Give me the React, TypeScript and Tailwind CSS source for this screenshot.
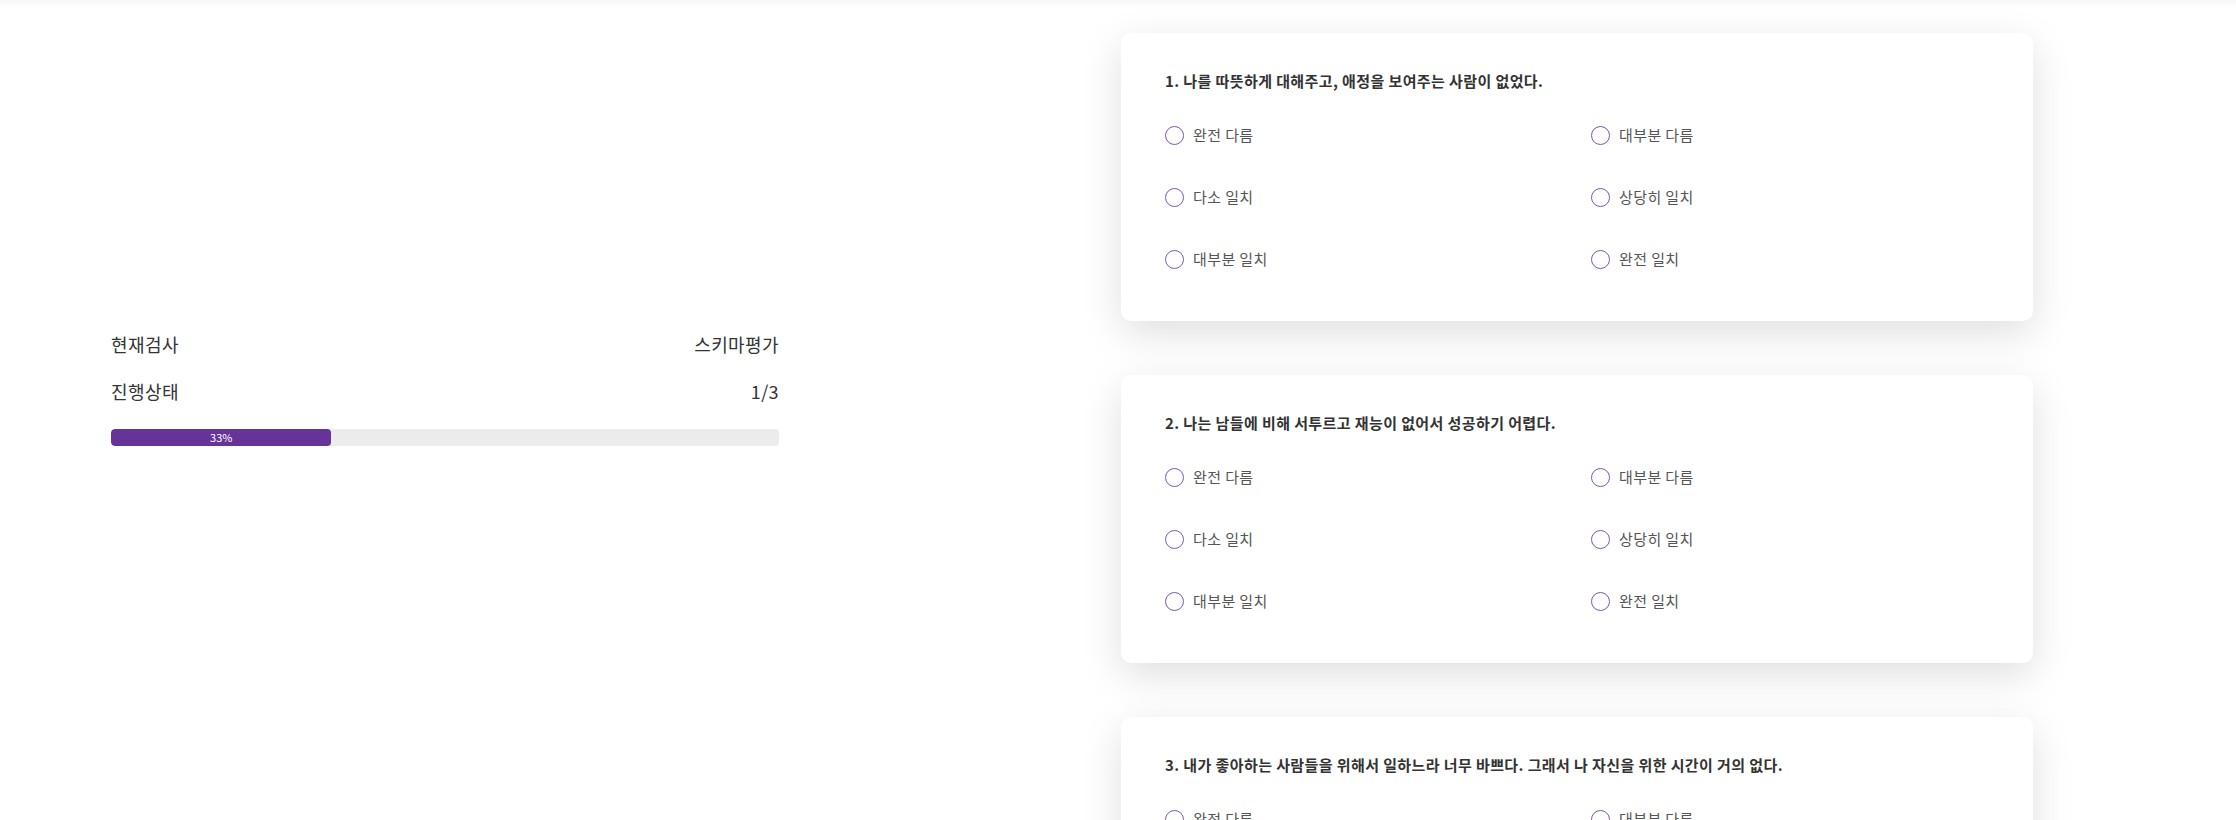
import React from 'react';

const options = ['완전 다름', '대부분 다름', '다소 일치', '상당히 일치', '대부분 일치', '완전 일치'];

const questions = [
  '1. 나를 따뜻하게 대해주고, 애정을 보여주는 사람이 없었다.',
  '2. 나는 남들에 비해 서투르고 재능이 없어서 성공하기 어렵다.',
  '3. 내가 좋아하는 사람들을 위해서 일하느라 너무 바쁘다. 그래서 나 자신을 위한 시간이 거의 없다.',
];

function QuestionCard({ text }: { text: string }) {
  return (
    <div className="bg-white rounded-[10px] shadow-[0_12px_40px_rgba(0,0,0,0.13)] pt-[38px] pb-[31px] px-[44px]">
      <p className="text-[15px] leading-[20px] font-bold tracking-[0.4px] text-[#333]">{text}</p>
      <div className="mt-[13px] grid grid-cols-2 gap-x-[28px]">
        {options.map((opt) => (
          <label key={opt} className="h-[62px] flex items-center gap-[9px] cursor-pointer">
            <span className="w-[19px] h-[19px] rounded-full border-[1.5px] border-[#7d55b6] bg-white shrink-0" />
            <span className="text-[15px] tracking-[0.4px] text-[#555]">{opt}</span>
          </label>
        ))}
      </div>
    </div>
  );
}

export default function App() {
  const progress = 33;
  return (
    <div
      className="h-[820px] overflow-hidden bg-white shadow-[inset_0_8px_8px_-6px_rgba(0,0,0,0.05)]"
      style={{ fontFamily: '"Noto Sans CJK KR", "Noto Sans", sans-serif' }}
    >
      <div className="flex pl-[111px]">
        {/* Status panel */}
        <div className="w-[668px] pt-[332px] shrink-0">
          <div className="flex justify-between text-[18px] leading-[24px] tracking-[0.4px] text-[#333]">
            <span>현재검사</span>
            <span>스키마평가</span>
          </div>
          <div className="mt-[23px] flex justify-between text-[18px] leading-[24px] tracking-[0.4px] text-[#333]">
            <span>진행상태</span>
            <span>1/3</span>
          </div>
          <div className="mt-[26px] h-[17px] rounded-[4px] bg-[#ececec] overflow-hidden">
            <div
              className="h-full bg-[#663399] rounded-[4px] flex items-center justify-center text-[11px] text-white"
              style={{ width: `${progress}%` }}
            >
              {progress}%
            </div>
          </div>
        </div>

        {/* Questions */}
        <div className="ml-[342px] w-[912px] shrink-0 pt-[33px] flex flex-col gap-[54px]">
          {questions.map((q) => (
            <QuestionCard key={q} text={q} />
          ))}
        </div>
      </div>
    </div>
  );
}
